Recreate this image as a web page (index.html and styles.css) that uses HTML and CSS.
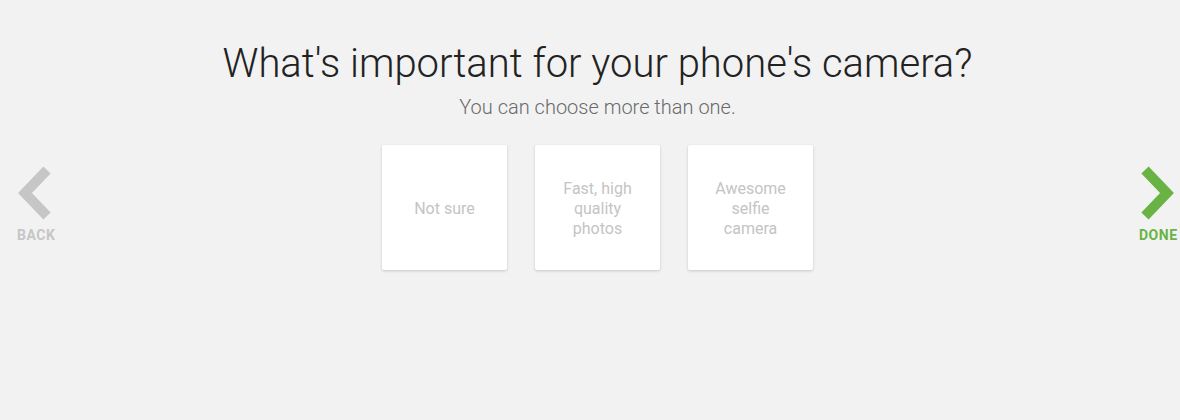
FILE: index.html
```html
<!DOCTYPE html>
<html>
<head>
<meta charset="utf-8">
<link rel="stylesheet" href="styles.css">
</head>
<body>
<div class="page">
  <a class="nav nav-back">
    <svg class="chev" width="36" height="54" viewBox="0 0 36 54"><polyline points="31,4 9,27 31,50" fill="none" stroke="#c6c6c6" stroke-width="10" stroke-linecap="butt" stroke-linejoin="miter"/></svg>
    <span class="nav-label">BACK</span>
  </a>
  <main class="content">
    <h1 class="title">What's important for your phone's camera?</h1>
    <p class="subtitle">You can choose more than one.</p>
    <div class="cards">
      <div class="card"><span>Not sure</span></div>
      <div class="card"><span>Fast, high quality photos</span></div>
      <div class="card"><span>Awesome selfie camera</span></div>
    </div>
  </main>
  <a class="nav nav-done">
    <svg class="chev" width="36" height="54" viewBox="0 0 36 54"><polyline points="6,4 28,27 6,50" fill="none" stroke="#69b345" stroke-width="10" stroke-linecap="butt" stroke-linejoin="miter"/></svg>
    <span class="nav-label">DONE</span>
  </a>
</div>
</body>
</html>
```
FILE: styles.css
```css
html, body {
  margin: 0;
  padding: 0;
  background: #f2f2f2;
  font-family: Roboto, "Liberation Sans", sans-serif;
}
.page {
  position: relative;
  width: 1180px;
  height: 420px;
}
.content {
  display: flex;
  flex-direction: column;
  align-items: center;
  padding-top: 38px;
  padding-left: 15px;
}
.title {
  margin: 0;
  font-size: 40px;
  font-weight: 300;
  color: #222;
  line-height: 52px;
}
.subtitle {
  margin: 4px 0 0;
  font-size: 20px;
  font-weight: 300;
  color: #6a6a6a;
  line-height: 26px;
}
.cards {
  display: flex;
  gap: 28px;
  margin-top: 25px;
}
.card {
  width: 125px;
  height: 125px;
  background: #fff;
  border-radius: 2px;
  box-shadow: 0 1px 3px rgba(0,0,0,0.18);
  display: flex;
  align-items: center;
  justify-content: center;
  text-align: center;
  box-sizing: border-box;
  padding: 2px 22px 0;
  font-size: 16px;
  line-height: 20px;
  color: #c4c4c4;
}
.nav {
  position: absolute;
  top: 166px;
  display: flex;
  flex-direction: column;
  align-items: flex-start;
  font-weight: 700;
  font-size: 14px;
  letter-spacing: 0.5px;
}
.nav-back { left: 16px; color: #c6c6c6; }
.nav-done { left: 1136px; color: #69b345; }
.nav-label { margin-top: 7px; margin-left: 1px; }
.nav-done .chev { margin-left: 3px; }
.nav-done .nav-label { margin-left: 3px; }
```
